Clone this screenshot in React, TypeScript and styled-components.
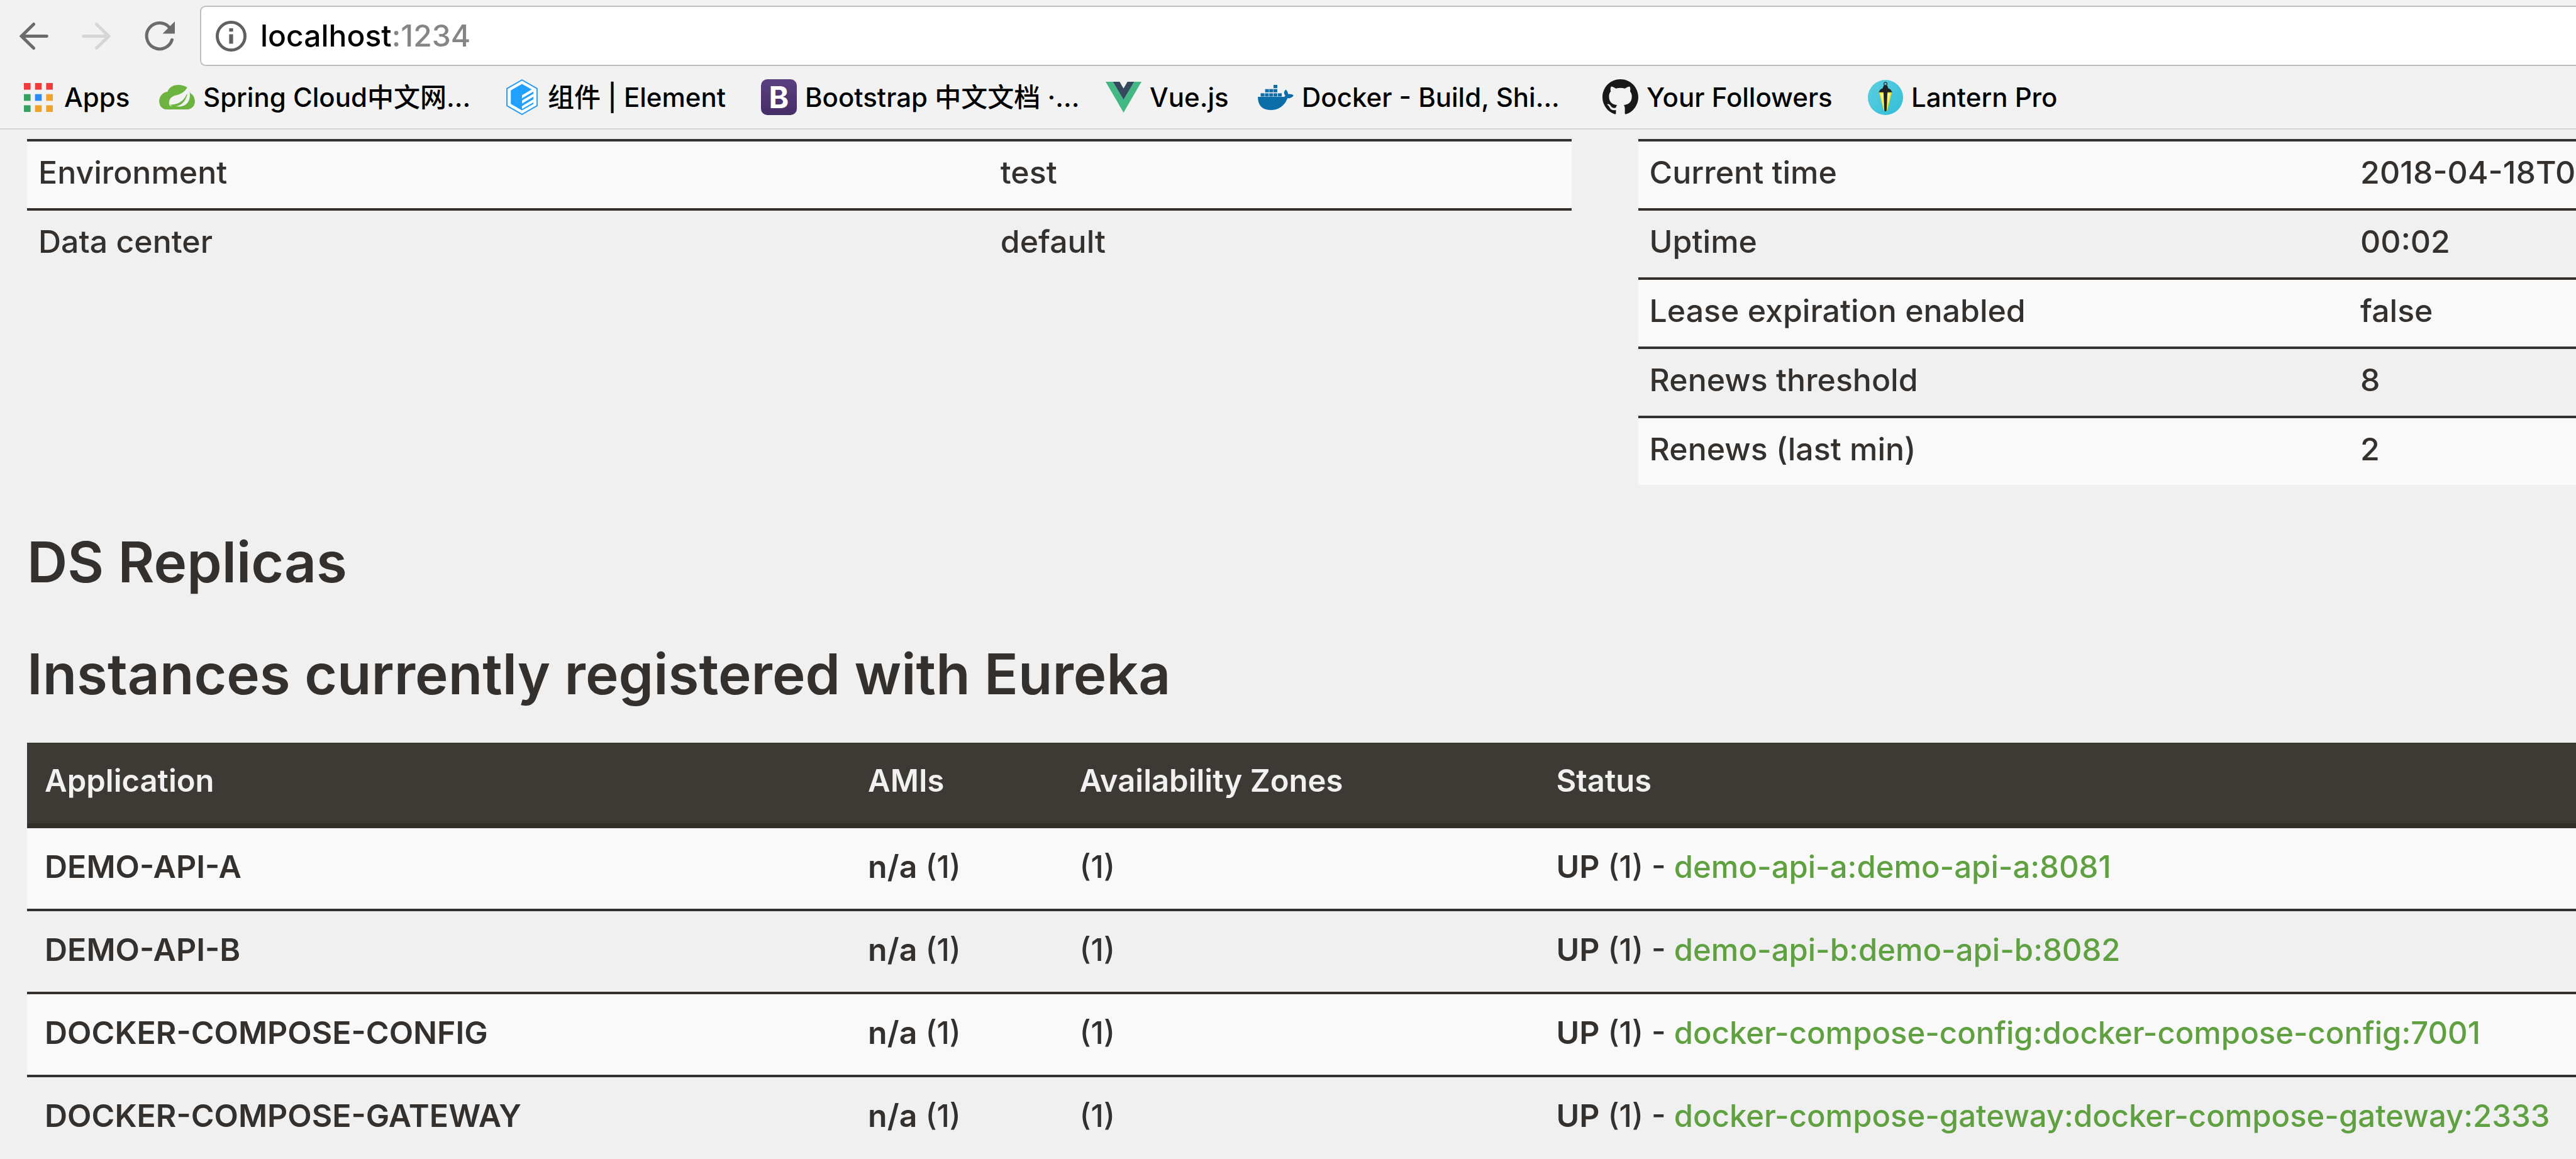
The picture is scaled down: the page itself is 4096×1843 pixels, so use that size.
import React from 'react';
import styled, { createGlobalStyle } from 'styled-components';

const GlobalStyle = createGlobalStyle`
  *, *::before, *::after { box-sizing: border-box; }
  body {
    margin: 0;
    background: #f0f0f0;
    color: #34302d;
    font-family: Inter, "Noto Sans CJK SC", sans-serif;
    font-weight: 500;
    overflow: hidden;
  }
`;

/* ---------- Browser chrome ---------- */

const Chrome = styled.header`
  background: #f2f2f2;
  border-bottom: 2px solid #d6d6d6;
`;

const Toolbar = styled.div`
  display: flex;
  align-items: center;
  padding: 9px 0 0 31px;
`;

const NavButtons = styled.div`
  display: flex;
  gap: 53px;
  margin-right: 39px;
`;

const NavButton = styled.button`
  display: grid;
  place-items: center;
  width: 46px;
  height: 48px;
  padding: 0;
  border: 0;
  background: none;
  color: #6b6b6b;

  &:disabled { color: #d6d6d6; }
  &:last-child { width: 50px; }
`;

const Omnibox = styled.form`
  display: flex;
  flex: 1;
  align-items: center;
  gap: 22px;
  height: 96px;
  padding-left: 23px;
  border: 2px solid #bebebe;
  border-right: 0;
  border-radius: 9px 0 0 9px;
  background: #fff;
`;

const InfoButton = styled.button`
  display: grid;
  place-items: center;
  padding: 0;
  border: 0;
  background: none;
  color: #606060;
`;

const Address = styled.input`
  flex: 1;
  min-width: 0;
  padding: 0;
  border: 0;
  outline: 0;
  font: 500 48px/64px Inter, sans-serif;
  color: #000;
  background: linear-gradient(90deg, #000 211px, #858585 211px);
  background-clip: text;
  -webkit-background-clip: text;
  -webkit-text-fill-color: transparent;
`;

const Bookmarks = styled.nav`
  display: grid;
  grid-template-columns: 221px 548px 409px 548px 242px 548px 421px auto;
  align-items: center;
  height: 99px;
  padding-left: 32px;
`;

const Bookmark = styled.a`
  display: flex;
  align-items: center;
  gap: 13px;
  color: #000;
  font-size: 42px;
  line-height: 60px;
  text-decoration: none;
  white-space: nowrap;
`;

const Favicon = styled.span`
  display: grid;
  flex: none;
  place-items: center;
  width: 57px;
  height: 57px;
`;

const BootstrapBadge = styled(Favicon)`
  border-radius: 10px;
  background: linear-gradient(#5a4080, #452d66);
  color: #fff;
  font-size: 48px;
  font-weight: 700;
  line-height: 57px;
`;

/* ---------- Page ---------- */

const Page = styled.main`
  padding: 15px 0 0 43px;
`;

const Panels = styled.section`
  display: grid;
  grid-template-columns: calc(60vw - 2px) minmax(0, 1fr);
  gap: 106px;
  align-items: start;
`;

const DataTable = styled.table`
  width: 100%;
  table-layout: fixed;
  border-collapse: separate;
  border-spacing: 0;
  font-size: 50px;
  line-height: 62px;
  text-align: left;
  white-space: nowrap;

  tbody tr:nth-child(odd) { background: #f9f9f9; }
`;

const InfoCell = styled.td<{ $width?: string }>`
  width: ${p => p.$width ?? 'auto'};
  padding: 18px 0 26px 18px;
  border-top: 4px solid #34302d;
  overflow: hidden;
`;

const Heading = styled.h1`
  margin: 68px 0 0;
  font-size: 89px;
  font-weight: 600;
  line-height: 110px;
`;

const InstanceTable = styled(DataTable)`
  margin-top: 54px;
  font-size: 49px;

  tbody tr + tr td { border-top: 4px solid #34302d; }
`;

const HeadCell = styled.th<{ $width?: string }>`
  width: ${p => p.$width ?? 'auto'};
  padding: 30px 28px 36px;
  border-bottom: 8px solid #322e29;
  background: #3d3a35;
  color: #f1f1f1;
  font-weight: 600;
`;

const Cell = styled.td`
  padding: 30px 0 35px 28px;

  b {
    font-size: 50px;
    font-weight: 600;
  }
`;

const InstanceLink = styled.a`
  color: #5fa140;
  text-decoration: none;
`;

/* ---------- Icons ---------- */

const ArrowIcon = ({ flip = false }: { flip?: boolean }) => (
  <svg width="46" height="45" viewBox="0 0 52 50" fill="none" stroke="currentColor" strokeWidth="5.6" strokeLinecap="round">
    <path d={flip ? 'M3 25H47M26.5 3.5 48.5 25 26.5 46.5' : 'M49 25H5M25.5 3.5 3.5 25 25.5 46.5'} />
  </svg>
);

const ReloadIcon = () => (
  <svg width="49" height="47" viewBox="0 0 55 53" fill="none">
    <path d="M49 33A23.3 23.3 0 1 1 44 10.5" stroke="currentColor" strokeWidth="5.6" strokeLinecap="round" />
    <path d="M54 0V22H32Z" fill="currentColor" />
  </svg>
);

const InfoIcon = () => (
  <svg width="49" height="49" viewBox="0 0 55 55" fill="none">
    <circle cx="27.5" cy="27.5" r="24.8" stroke="currentColor" strokeWidth="5.4" />
    <path d="M24 13.5h7v6h-7zM24 24h7v17h-7z" fill="currentColor" />
  </svg>
);

const appColors = ['#f43b3b', '#f43b3b', '#f43b3b', '#37a060', '#2a8cf4', '#f0a22a', '#37a060', '#f0a22a', '#f0a22a'];

const AppsIcon = () => (
  <svg width="46" height="46" viewBox="0 0 52 52">
    {appColors.map((fill, i) => (
      <rect key={i} x={(i % 3) * 20} y={Math.floor(i / 3) * 20} width="12" height="12" fill={fill} />
    ))}
  </svg>
);

const SpringIcon = () => (
  <svg width="57" height="39" viewBox="0 0 64 44">
    <path d="M14 44C5 44 0 37 0 29 0 20 7 13 15 12 18 4 25 0 34 0c7 0 12 2 17 5l5 10c5 3 8 8 8 15 0 8-6 14-14 14Z" fill="#6cb33f" />
    <path d="M52 2c4 12 5 24-2 31-6 7-17 7-26 4l-3 2-3-3c-1-8 1-14 11-17 10-2 17-6 23-17Z" fill="#f2f2f2" />
    <path d="M22 36c12-1 21-5 28-19-4 15-13 22-26 21Z" fill="#6cb33f" stroke="#6cb33f" strokeLinejoin="round" />
    <circle cx="20.5" cy="37" r="1.8" fill="#6cb33f" />
    <circle cx="20.5" cy="37" r="1" fill="#f2f2f2" />
  </svg>
);

const ElementIcon = () => (
  <svg width="50" height="57" viewBox="0 0 56 64">
    <path d="M28 0 56 16V48L28 64 0 48V16Z" fill="#2d9cf5" />
    <path d="M28 2.6 53.8 17.3V46.7L28 61.4 2.2 46.7V17.3Z" fill="#fff" />
    <path d="M28 8.5 48.5 20V44L28 55.5 8 44V20Z" fill="#20a0ff" />
    <path d="M28 28.5 49 16v5.5L28 34ZM28 38 49 25.5V31L28 43.5ZM31 46 49 35.5V41L28 53v-5Z" fill="#fff" />
  </svg>
);

const VueIcon = () => (
  <svg width="57" height="49" viewBox="0 0 64 55">
    <path d="M0 0H13L32 32 51 0H64L32 55Z" fill="#42b883" />
    <path d="M13 0H25L32 12 39 0H51L32 32Z" fill="#35495e" />
  </svg>
);

const deck = [[28, 0], [13, 7.5], [20.5, 7.5], [28, 7.5], [5, 15], [12.7, 15], [20.4, 15], [28.1, 15], [36, 15]];

const DockerIcon = () => (
  <svg width="57" height="40" viewBox="0 0 64 45" fill="#0b6ea8">
    {deck.map(([x, y]) => <rect key={`${x}-${y}`} x={x} y={y} width="6.8" height="5.8" />)}
    <path d="M0 21.5H45C47.5 21.5 49 20 49 19 46 15 46 12 50 8.5 53 11 54 14 54 16.5 58 16 62 17 64 19 62 22 58 24 53 24 48 37 38 45 23 45 7 45 0 36 0 21.5Z" />
  </svg>
);

const GithubIcon = () => (
  <svg width="57" height="57" viewBox="0 0 16 16" fill="#191717">
    <path d="M8 0C3.58 0 0 3.58 0 8c0 3.54 2.29 6.53 5.47 7.59.4.07.55-.17.55-.38 0-.19-.01-.82-.01-1.49-2.01.37-2.53-.49-2.69-.94-.09-.23-.48-.94-.82-1.13-.28-.15-.68-.52-.01-.53.63-.01 1.08.58 1.23.82.72 1.21 1.87.87 2.33.66.07-.52.28-.87.51-1.07-1.78-.2-3.64-.89-3.64-3.95 0-.87.31-1.59.82-2.15-.08-.2-.36-1.02.08-2.12 0 0 .67-.21 2.2.82.64-.18 1.32-.27 2-.27.68 0 1.36.09 2 .27 1.53-1.04 2.2-.82 2.2-.82.44 1.1.16 1.92.08 2.12.51.56.82 1.27.82 2.15 0 3.07-1.87 3.75-3.65 3.95.29.25.54.73.54 1.48 0 1.07-.01 1.93-.01 2.2 0 .21.15.46.55.38A8.013 8.013 0 0016 8c0-4.42-3.58-8-8-8z" />
  </svg>
);

const LanternIcon = () => (
  <svg width="56" height="56" viewBox="0 0 62 62">
    <defs>
      <linearGradient id="lantern" x1="0" y1="0" x2="1" y2="1">
        <stop offset="0" stopColor="#5fcfe0" />
        <stop offset="1" stopColor="#2fbdd8" />
      </linearGradient>
    </defs>
    <circle cx="31" cy="31" r="31" fill="url(#lantern)" />
    <circle cx="31" cy="7" r="2.8" fill="none" stroke="#333" strokeWidth="1.4" />
    <path d="M20 22H42L34 54H28Z" fill="#ffe81a" />
    <path d="M23 24 28 48V24ZM39 24 34 48V24Z" fill="#fff59a" />
    <path d="M28 10h6l2 5 4 2 3 5H34.5L33 54 31 56 29 54 27.5 22H19l3-5 4-2Z" fill="#222" />
  </svg>
);

/* ---------- Data ---------- */

const bookmarks: { label: string; icon: React.ReactNode }[] = [
  { label: 'Apps', icon: <Favicon><AppsIcon /></Favicon> },
  { label: 'Spring Cloud中文网...', icon: <Favicon><SpringIcon /></Favicon> },
  { label: '组件 | Element', icon: <Favicon><ElementIcon /></Favicon> },
  { label: 'Bootstrap 中文文档 ·...', icon: <BootstrapBadge aria-hidden>B</BootstrapBadge> },
  { label: 'Vue.js', icon: <Favicon><VueIcon /></Favicon> },
  { label: 'Docker - Build, Shi...', icon: <Favicon><DockerIcon /></Favicon> },
  { label: 'Your Followers', icon: <Favicon><GithubIcon /></Favicon> },
  { label: 'Lantern Pro', icon: <Favicon><LanternIcon /></Favicon> },
];

const environment = [['Environment', 'test'], ['Data center', 'default']];

const runtime = [
  ['Current time', '2018-04-18T0'],
  ['Uptime', '00:02'],
  ['Lease expiration enabled', 'false'],
  ['Renews threshold', '8'],
  ['Renews (last min)', '2'],
];

const instances = [
  { name: 'DEMO-API-A', link: 'demo-api-a:demo-api-a:8081' },
  { name: 'DEMO-API-B', link: 'demo-api-b:demo-api-b:8082' },
  { name: 'DOCKER-COMPOSE-CONFIG', link: 'docker-compose-config:docker-compose-config:7001' },
  { name: 'DOCKER-COMPOSE-GATEWAY', link: 'docker-compose-gateway:docker-compose-gateway:2333' },
];

const InfoTable = ({ rows, split }: { rows: string[][]; split: string }) => (
  <DataTable>
    <tbody>
      {rows.map(([label, value]) => (
        <tr key={label}>
          <InfoCell $width={split}>{label}</InfoCell>
          <InfoCell>{value}</InfoCell>
        </tr>
      ))}
    </tbody>
  </DataTable>
);

export default function App() {
  return (
    <>
      <GlobalStyle />
      <Chrome>
        <Toolbar>
          <NavButtons>
            <NavButton aria-label="Back"><ArrowIcon /></NavButton>
            <NavButton aria-label="Forward" disabled><ArrowIcon flip /></NavButton>
            <NavButton aria-label="Reload"><ReloadIcon /></NavButton>
          </NavButtons>
          <Omnibox>
            <InfoButton type="button" aria-label="Site information"><InfoIcon /></InfoButton>
            <Address aria-label="Address" defaultValue="localhost:1234" />
          </Omnibox>
        </Toolbar>
        <Bookmarks>
          {bookmarks.map(({ label, icon }) => (
            <Bookmark key={label} href="#">{icon}{label}</Bookmark>
          ))}
        </Bookmarks>
      </Chrome>
      <Page>
        <Panels>
          <InfoTable rows={environment} split="62.3%" />
          <InfoTable rows={runtime} split="75.8%" />
        </Panels>
        <Heading>DS Replicas</Heading>
        <Heading>Instances currently registered with Eureka</Heading>
        <InstanceTable>
          <thead>
            <tr>
              <HeadCell $width="32.3%">Application</HeadCell>
              <HeadCell $width="8.3%">AMIs</HeadCell>
              <HeadCell $width="18.7%">Availability Zones</HeadCell>
              <HeadCell>Status</HeadCell>
            </tr>
          </thead>
          <tbody>
            {instances.map(({ name, link }) => (
              <tr key={name}>
                <Cell><b>{name}</b></Cell>
                <Cell><b>n/a</b> (1)</Cell>
                <Cell>(1)</Cell>
                <Cell><b>UP</b> (1) - <InstanceLink href="#">{link}</InstanceLink></Cell>
              </tr>
            ))}
          </tbody>
        </InstanceTable>
      </Page>
    </>
  );
}
